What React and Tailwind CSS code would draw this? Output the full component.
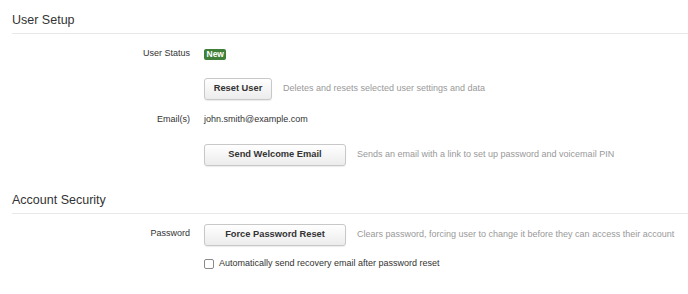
import React from 'react'

const font = { fontFamily: '"Liberation Sans", Arial, sans-serif' }

function Section({ title, children }) {
  return (
    <section>
      <h2 className="pb-[5px] border-b border-[#e8e8e8] text-[12.5px] leading-[16px] text-[#333]">{title}</h2>
      {children}
    </section>
  )
}

function Row({ label, className = '', labelClass = '', children }) {
  return (
    <div className={`flex items-center ${className}`}>
      <div className={`w-[178px] text-right text-[9px] text-[#333] ${labelClass}`}>{label}</div>
      <div className="ml-[14px] flex items-center">{children}</div>
    </div>
  )
}

function Button({ width, children }) {
  return (
    <button
      className={`${width} h-[22px] rounded-[3px] border border-[#c8c8c8] bg-gradient-to-b from-white to-[#ececec] text-[9.3px] font-bold text-[#333] shadow-[0_1px_1px_rgba(0,0,0,0.08)]`}
    >
      {children}
    </button>
  )
}

function Hint({ children }) {
  return <span className="ml-[11px] text-[9px] text-[#999]">{children}</span>
}

export default function App() {
  return (
    <div style={font} className="w-[688px] h-[294px] bg-white pl-3 pt-[12px] overflow-hidden">
      <Section title="User Setup">
        <Row label="User Status" className="mt-[13px] h-[14px]">
          <span className="inline-flex h-[11px] items-center rounded-[2px] bg-[#3f7f3a] px-[2.5px] text-[8.5px] font-bold text-white">New</span>
        </Row>
        <Row label="" className="mt-[17px]">
          <Button width="w-[68px]">Reset User</Button>
          <Hint>Deletes and resets selected user settings and data</Hint>
        </Row>
        <Row label="Email(s)" className="mt-[13px] h-[14px]">
          <span className="text-[9px] text-[#333]">john.smith@example.com</span>
        </Row>
        <Row label="" className="mt-[17px]">
          <Button width="w-[142px]">Send Welcome Email</Button>
          <Hint>Sends an email with a link to set up password and voicemail PIN</Hint>
        </Row>
      </Section>

      <div className="pt-[26px]">
        <Section title="Account Security">
          <Row label="Password" className="mt-[10px]" labelClass="-mt-[3px]">
            <Button width="w-[142px]">Force Password Reset</Button>
            <Hint>Clears password, forcing user to change it before they can access their account</Hint>
          </Row>
          <div className="ml-[192px] mt-[11px] flex items-center">
            <span className="h-[10px] w-[10px] rounded-[2px] border border-[#8a8a8a] bg-white" />
            <span className="ml-[5px] text-[9px] text-[#333]">Automatically send recovery email after password reset</span>
          </div>
        </Section>
      </div>
    </div>
  )
}
